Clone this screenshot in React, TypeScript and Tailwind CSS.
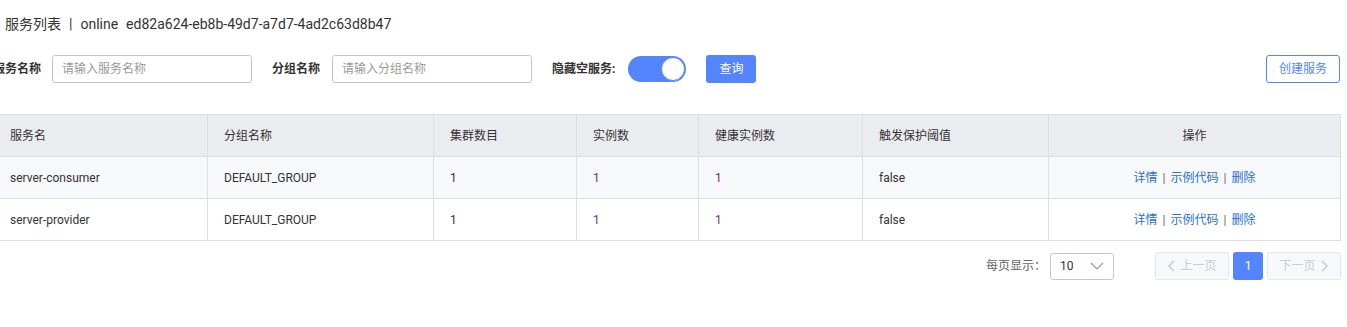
import React from "react";

const rows = [
  { name: "server-consumer", group: "DEFAULT_GROUP", cluster: "1", inst: "1", healthy: "1", protect: "false" },
  { name: "server-provider", group: "DEFAULT_GROUP", cluster: "1", inst: "1", healthy: "1", protect: "false" },
];

const font = { fontFamily: 'Roboto, "Liberation Sans", "Noto Sans CJK SC", Arial, sans-serif' };

export default function App() {
  return (
    <div className="w-[1347px] h-[327px] bg-white overflow-hidden text-[#333]" style={font}>
      <div className="h-[48px] flex items-center pl-[5px] text-[14px] text-[#333]">
        <span>服务列表</span>
        <span className="mx-[8px]">|</span>
        <span>online</span>
        <span className="ml-[8px]">ed82a624-eb8b-49d7-a7d7-4ad2c63d8b47</span>
      </div>
      <div className="ml-[-7px] w-[1348px]">
        <div className="mt-[7px] h-[28px] flex items-center text-[12px]">
          <span className="font-bold text-[#333] mr-[11px] whitespace-nowrap">服务名称</span>
          <div className="w-[200px] h-[28px] border border-[#c4c6cf] rounded-[3px] flex items-center px-[9px] text-[#999]">请输入服务名称</div>
          <span className="font-bold text-[#333] ml-[20px] mr-[12px] whitespace-nowrap">分组名称</span>
          <div className="w-[200px] h-[28px] border border-[#c4c6cf] rounded-[3px] flex items-center px-[9px] text-[#999]">请输入分组名称</div>
          <span className="font-bold text-[#333] ml-[20px] mr-[13px] whitespace-nowrap">隐藏空服务:</span>
          <div className="w-[58px] h-[26px] rounded-full bg-[#5584ff] flex items-center justify-end p-[1px]">
            <div className="w-[24px] h-[24px] rounded-full bg-white border border-[#5584ff]"></div>
          </div>
          <div className="ml-[20px] w-[50px] h-[28px] rounded-[3px] bg-[#5584ff] text-white flex items-center justify-center">查询</div>
          <div className="ml-auto mr-[1px] w-[74px] h-[28px] rounded-[3px] border border-[#5584ff] text-[#5584ff] flex items-center justify-center">创建服务</div>
        </div>
        <div className="mt-[31px]">
          <table className="w-[1347px] border-collapse text-[12px] table-fixed">
            <colgroup>
              <col className="w-[214px]" />
              <col className="w-[226px]" />
              <col className="w-[143px]" />
              <col className="w-[122px]" />
              <col className="w-[164px]" />
              <col className="w-[186px]" />
              <col className="w-[292px]" />
            </colgroup>
            <thead>
              <tr className="h-[42px] bg-[#ebecf0] text-[#333]">
                {["服务名", "分组名称", "集群数目", "实例数", "健康实例数", "触发保护阈值"].map((h) => (
                  <th key={h} className="font-normal text-left px-[16px] border border-[#dcdee3]">{h}</th>
                ))}
                <th className="font-normal text-center px-[16px] border border-[#dcdee3]">操作</th>
              </tr>
            </thead>
            <tbody>
              {rows.map((r, i) => (
                <tr key={r.name} className={`h-[42px] ${i === 0 ? "bg-[#f7f8fa]" : "bg-white"}`}>
                  <td className="px-[16px] border border-[#dcdee3]">{r.name}</td>
                  <td className="px-[16px] border border-[#dcdee3]">{r.group}</td>
                  <td className="px-[16px] border border-[#dcdee3]">{r.cluster}</td>
                  <td className="px-[16px] border border-[#dcdee3] text-[#7b2a8f]">{r.inst}</td>
                  <td className="px-[16px] border border-[#dcdee3] text-[#7b2a8f]">{r.healthy}</td>
                  <td className="px-[16px] border border-[#dcdee3]">{r.protect}</td>
                  <td className="px-[16px] border border-[#dcdee3] text-center">
                    <span className="text-[#2a6fd3]">详情</span>
                    <span className="mx-[5px] text-[#666]">|</span>
                    <span className="text-[#2a6fd3]">示例代码</span>
                    <span className="mx-[5px] text-[#666]">|</span>
                    <span className="text-[#2a6fd3]">删除</span>
                  </td>
                </tr>
              ))}
            </tbody>
          </table>
        </div>
        <div className="mt-[11px] flex items-center justify-end text-[12px]">
          <span className="text-[#666] mr-[4px]">每页显示：</span>
          <div className="w-[64px] h-[27px] border border-[#c4c6cf] rounded-[3px] flex items-center justify-between pl-[9px] pr-[9px] text-[#333]">
            <span>10</span>
            <svg width="14" height="8" viewBox="0 0 14 8" fill="none">
              <path d="M1 1l6 6 6-6" stroke="#999" strokeWidth="1.2" />
            </svg>
          </div>
          <div className="ml-[41px] w-[74px] h-[28px] rounded-[3px] border border-[#e6e7eb] bg-[#f7f8fa] text-[#ccc] flex items-center justify-center gap-[5px]">
            <svg width="8" height="12" viewBox="0 0 8 12" fill="none">
              <path d="M7 1L2 6l5 5" stroke="#ccc" strokeWidth="1.5" />
            </svg>
            <span>上一页</span>
          </div>
          <div className="ml-[4px] w-[30px] h-[28px] rounded-[3px] bg-[#5584ff] text-white flex items-center justify-center">1</div>
          <div className="ml-[4px] w-[74px] h-[28px] rounded-[3px] border border-[#e6e7eb] bg-[#f7f8fa] text-[#ccc] flex items-center justify-center gap-[5px]">
            <span>下一页</span>
            <svg width="8" height="12" viewBox="0 0 8 12" fill="none">
              <path d="M1 1l5 5-5 5" stroke="#ccc" strokeWidth="1.5" />
            </svg>
          </div>
        </div>
      </div>
    </div>
  );
}
